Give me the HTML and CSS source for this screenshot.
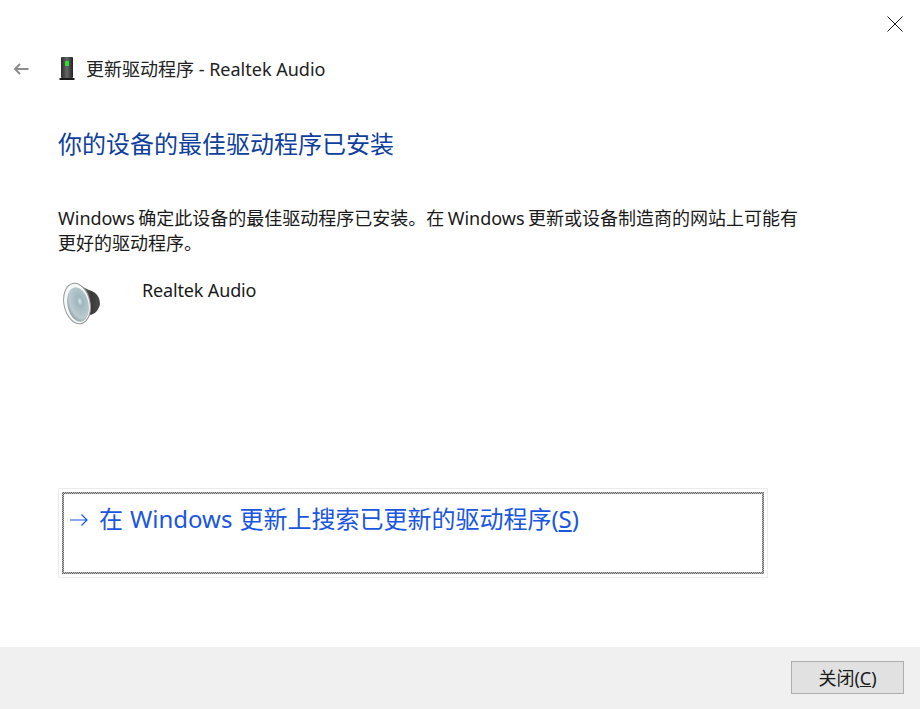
FILE: index.html
```html
<!DOCTYPE html>
<html lang="zh-CN">
<head>
<meta charset="utf-8">
<title>更新驱动程序</title>
<link rel="stylesheet" href="styles.css">
</head>
<body>
<div class="window">
  <div class="titlebar">
    <svg class="close" width="16" height="16" viewBox="0 0 16 16"><path d="M.5.5l15 15M15.500.5l-15 15" stroke="#1a1a1a" stroke-width="1" fill="none"/></svg>
  </div>
  <div class="nav">
    <svg class="back" width="16" height="12" viewBox="0 0 16 12"><path d="M15.500 6H2M7 1L2 6l5 5" stroke="#8c8c8c" stroke-width="2" fill="none"/></svg>
    <svg class="device" width="16" height="24" viewBox="0 0 16 24">
      <defs><linearGradient id="tower" x1="0" x2="1" y1="0" y2="0"><stop offset="0" stop-color="#2a2a2a"/><stop offset=".5" stop-color="#666"/><stop offset="1" stop-color="#222"/></linearGradient></defs>
      <rect x="2" y="0" width="12" height="21" rx="1" fill="url(#tower)"/>
      <rect x="6" y="4" width="4" height="5" fill="#2fdc2f"/>
      <rect x="0.500" y="21" width="15" height="2" fill="#1a1a1a"/>
    </svg>
    <span class="nav-title">更新驱动程序 - Realtek Audio</span>
  </div>
  <main class="content">
    <h1 class="heading">你的设备的最佳驱动程序已安装</h1>
    <p class="desc">Windows 确定此设备的最佳驱动程序已安装。在 Windows 更新或设备制造商的网站上可能有<br>更好的驱动程序。</p>
    <div class="device-row">
      <svg class="speaker" width="42" height="46" viewBox="0 0 42 46">
        <defs>
          <linearGradient id="back" x1="0" x2="1" y1="0" y2="0"><stop offset="0" stop-color="#a0a0a0"/><stop offset=".65" stop-color="#3a3a3a"/><stop offset="1" stop-color="#4a4a4a"/></linearGradient>
          <radialGradient id="cone" cx=".62" cy=".42" r=".65"><stop offset="0" stop-color="#d4e6ec"/><stop offset=".2" stop-color="#9fb6be"/><stop offset=".75" stop-color="#bccbd0"/><stop offset="1" stop-color="#8d9ea4"/></radialGradient>
        </defs>
        <path d="M13 2L27 9C35 11 38 17 38 23C37 29 33 33 28 34L23 41C20 43 16 43 13 41Z" fill="url(#back)"/>
        <ellipse cx="15" cy="22.500" rx="13" ry="20.500" transform="rotate(-12 15 22.500)" fill="#f6f8f8" stroke="#9a9a9a" stroke-width="1"/>
        <ellipse cx="16" cy="23.500" rx="10.500" ry="17.500" transform="rotate(-12 16 23.500)" fill="url(#cone)"/>
      </svg>
      <span class="device-name">Realtek Audio</span>
    </div>
    <div class="link-frame">
      <div class="link-box">
        <svg class="arrow" width="18" height="12" viewBox="0 0 18 12"><path d="M0 6H17M11.500.5L17 6l-5.500 5.500" stroke="#1a56e0" stroke-width="1.200" fill="none"/></svg>
        <span class="link-text">在 Windows 更新上搜索已更新的驱动程序(<u>S</u>)</span>
      </div>
    </div>
  </main>
  <footer class="footer">
    <button class="btn" type="button">关闭(<u>C</u>)</button>
  </footer>
</div>
</body>
</html>
```

FILE: styles.css
```css
html, body {
  margin: 0;
  padding: 0;
  background: #fff;
}
.window {
  width: 920px;
  height: 709px;
  display: flex;
  flex-direction: column;
  overflow: hidden;
  font-family: "Noto Sans", "Noto Sans CJK SC", sans-serif;
  color: #1a1a1a;
}
.titlebar {
  height: 48px;
  flex: none;
  display: flex;
  justify-content: flex-end;
  align-items: flex-start;
  box-sizing: border-box;
  padding: 16px 17px 0 0;
}
.close { display: block; }
.nav {
  height: 42px;
  flex: none;
  display: flex;
  align-items: center;
  padding-left: 13px;
}
.back { margin-right: 30px; }
.device { margin-right: 11px; }
.nav-title {
  font-size: 18px;
  line-height: 24px;
  color: #222;
}
.content {
  flex: 1;
  padding: 0 0 0 58px;
  display: flex;
  flex-direction: column;
}
.heading {
  margin: 37px 0 0;
  font-size: 24px;
  line-height: 34px;
  font-weight: 400;
  color: #0f3f9e;
}
.desc {
  margin: 45px 0 0;
  font-size: 18px;
  line-height: 25px;
  color: #1a1a1a;
  word-spacing: -1.3px;
}
.device-row {
  margin-top: 20px;
  display: flex;
  align-items: flex-start;
  height: 50px;
}
.speaker { margin: 5px 38px 0 4px; }
.device-name {
  font-size: 18px;
  line-height: 24px;
  margin-top: 2px;
  letter-spacing: -0.15px;
}
.link-frame {
  margin-top: 162px;
  width: 710px;
  height: 90px;
  box-sizing: border-box;
  border: 1px solid #ececec;
  padding: 3px;
}
.link-box {
  height: 82px;
  box-sizing: border-box;
  border: 2px solid transparent;
  background: linear-gradient(#fff, #fff) padding-box, repeating-conic-gradient(#666 0 25%, #bdbdbd 0 50%) 0 0 / 2px 2px border-box;
  padding: 8px 0 0 6px;
  display: flex;
  align-items: flex-start;
  gap: 11px;
  color: #1a56e0;
  font-size: 24px;
  line-height: 34px;
  word-spacing: 0.7px;
}
.arrow { margin-top: 12px; flex: none; }
.footer {
  flex: none;
  height: 62px;
  background: #f0f0f0;
  display: flex;
  justify-content: flex-end;
  align-items: flex-start;
  box-sizing: border-box;
  padding: 14px 16px 0 0;
}
.btn {
  width: 113px;
  height: 33px;
  background: #e1e1e1;
  border: 1px solid #adadad;
  border-radius: 0;
  font-family: inherit;
  font-size: 18px;
  line-height: 24px;
  color: #1a1a1a;
  padding: 0;
}
```
